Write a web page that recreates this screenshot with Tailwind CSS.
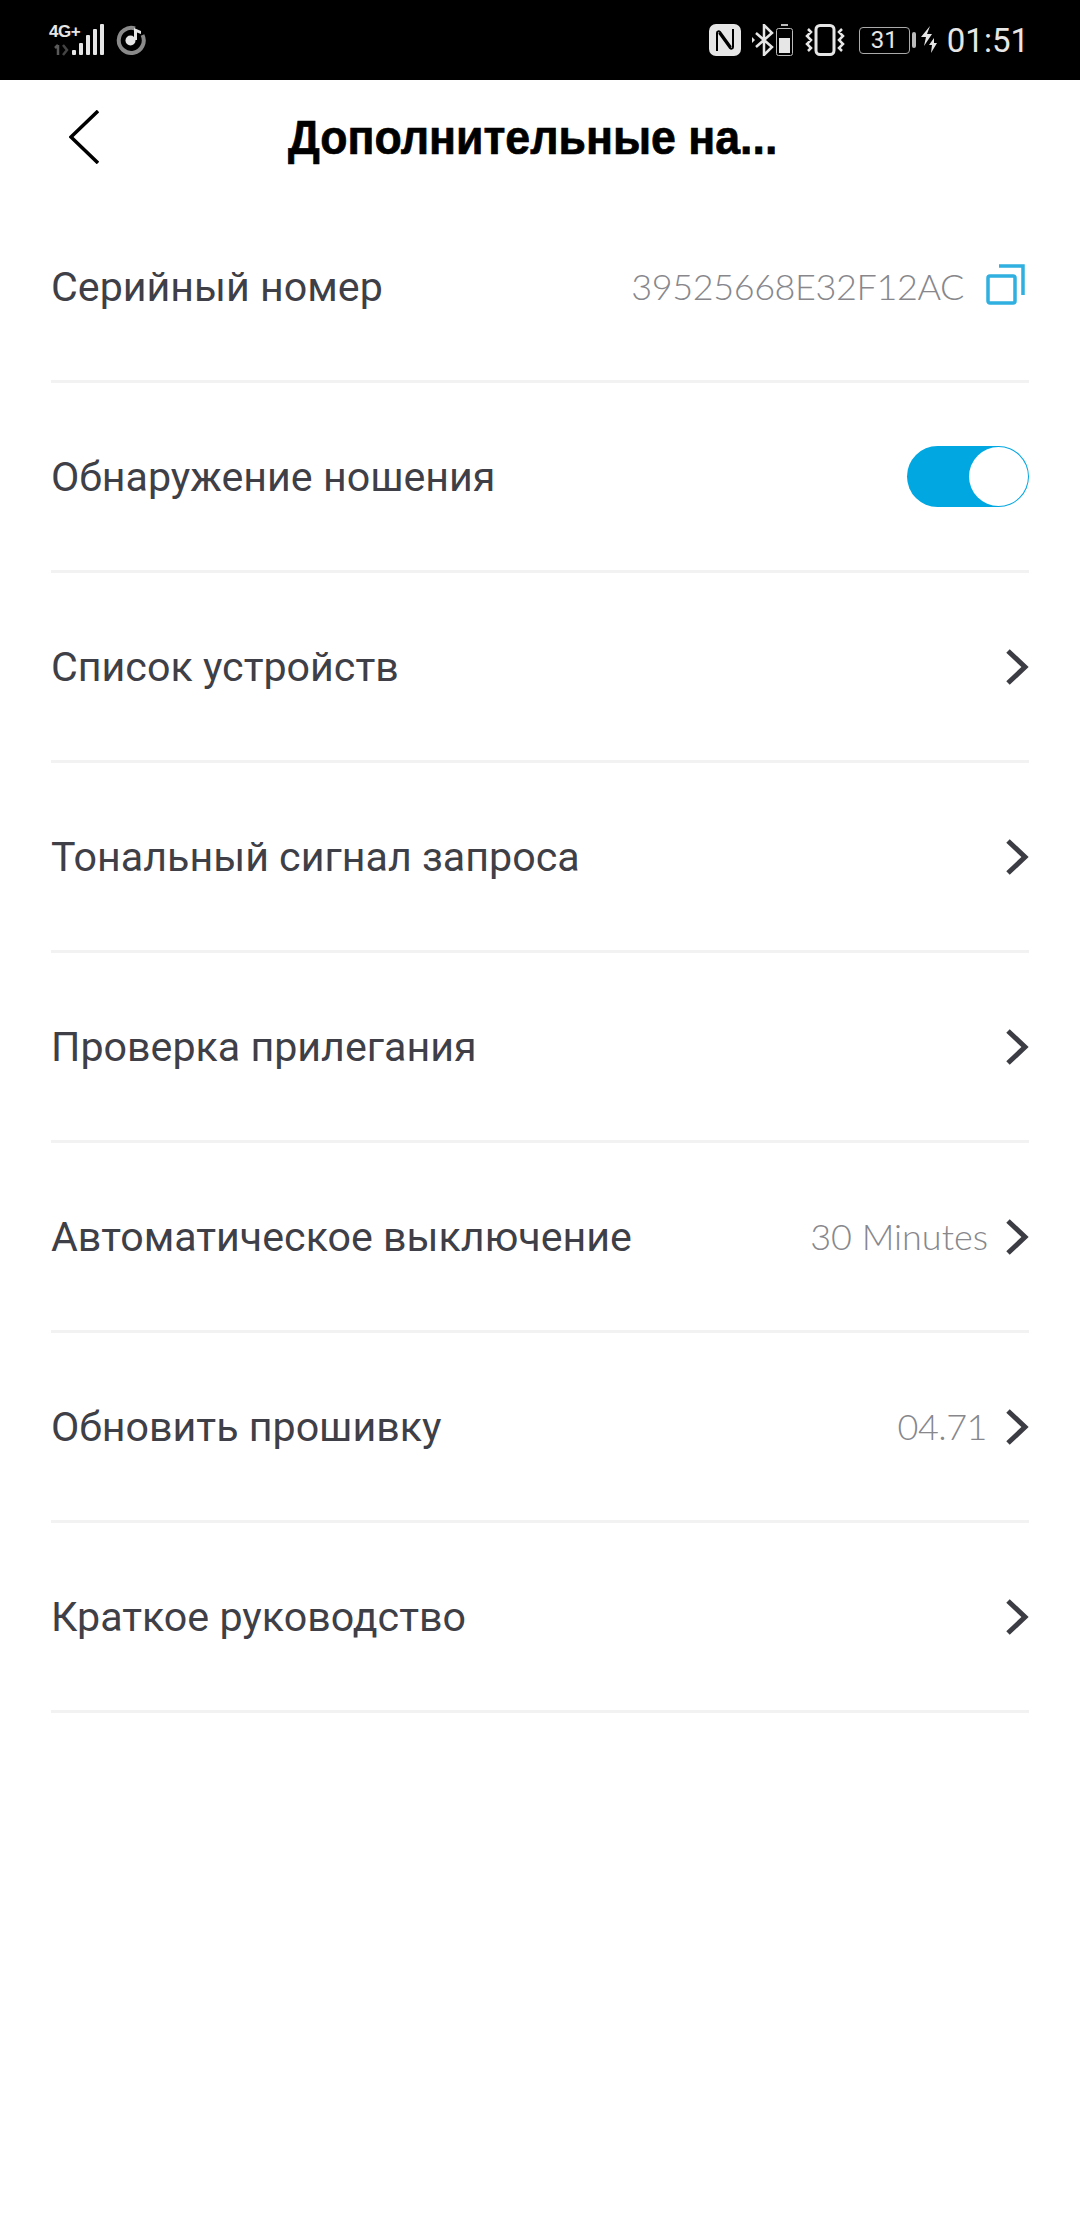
<!DOCTYPE html>
<html lang="ru">
<head>
    <meta charset="UTF-8">
    <meta name="viewport" content="width=device-width, initial-scale=1.0">
    <title>Дополнительные настройки</title>
    <script src="https://cdn.jsdelivr.net/npm/@tailwindcss/browser@4"></script>
</head>
<body class="bg-white font-['Roboto',sans-serif] antialiased">
<div class="w-[1080px] h-[2240px] bg-white overflow-hidden">

    <!-- status bar -->
    <div class="h-[80px] bg-black flex items-center justify-between pl-[49px] pr-[51px] text-[#e6e6e6]">
        <div class="flex items-center">
            <div class="w-[56px] h-[32px] flex flex-col justify-between relative">
                <span class="text-[17px] leading-[15px] font-bold tracking-[-0.5px] font-['Liberation_Sans',sans-serif]">4G+</span>
                <svg class="absolute left-0 top-0 w-[56px] h-[32px]" viewBox="0 0 56 32">
                    <path d="M9 21v10M9 21l-3 3" stroke="#5a5a5a" stroke-width="2.500" fill="none"/>
                    <path d="M14 21l4 5-4 5" stroke="#444" stroke-width="2.500" fill="none"/>
                    <rect x="23" y="26" width="4" height="5" rx="1" fill="#e6e6e6"/>
                    <rect x="30" y="19" width="4" height="12" rx="1" fill="#e6e6e6"/>
                    <rect x="37" y="11" width="4" height="20" rx="1" fill="#e6e6e6"/>
                    <rect x="44" y="5" width="4" height="26" rx="1" fill="#e6e6e6"/>
                    <rect x="51" y="0" width="4" height="31" rx="1" fill="#e6e6e6"/>
                </svg>
            </div>
            <svg class="w-[30px] h-[30px] ml-[11px]" viewBox="0 0 30 30">
                <path d="M19 3.500A12.500 12.500 0 1 0 26.500 10" stroke="#8a8a8a" stroke-width="4" fill="none"/>
                <circle cx="14.500" cy="15.500" r="5" fill="#e6e6e6"/>
                <path d="M18 15V3l7 3v3l-4-1.500V15z" fill="#e6e6e6"/>
            </svg>
        </div>
        <div class="flex items-center">
            <svg class="w-[32px] h-[32px]" viewBox="0 0 32 32">
                <rect width="32" height="32" rx="7" fill="#e6e6e6"/>
                <path d="M8 27V9c0-2 2-2 3-1l11 15M24 5v18c0 2-2 2-3 1L10 9" stroke="#000" stroke-width="2" fill="none"/>
            </svg>
            <svg class="w-[24px] h-[32px] ml-[11px]" viewBox="0 0 24 32">
                <path d="M4 9l16 14-8 8V1l8 8L4 23" stroke="#e6e6e6" stroke-width="2.500" fill="none"/>
                <path d="M0 13v6l3-3z" fill="#e6e6e6"/>
            </svg>
            <svg class="w-[17px] h-[32px]" viewBox="0 0 17 32">
                <rect x="5" y="0" width="7" height="2" fill="#bbb"/>
                <rect x="0.500" y="4.500" width="16" height="27" rx="2" stroke="#bbb" fill="none"/>
                <rect x="3" y="14" width="11" height="15" fill="#e6e6e6"/>
            </svg>
            <svg class="w-[40px] h-[32px] ml-[12px]" viewBox="0 0 40 32">
                <rect x="11" y="1.500" width="18" height="29" rx="4" stroke="#e6e6e6" stroke-width="3" fill="none"/>
                <path d="M3 5l3 3-4 4 4 4-4 4 4 4-3 3M37 5l-3 3 4 4-4 4 4 4-4 4 3 3" stroke="#e6e6e6" stroke-width="2.500" fill="none"/>
            </svg>
            <div class="ml-[14px] w-[51px] h-[27px] rounded-[4px] border border-[#aaa] flex items-center justify-center text-[24px] leading-none">31</div>
            <div class="ml-[2px] w-[4px] h-[16px] rounded-[2px] bg-[#bbb]"></div>
            <svg class="w-[17px] h-[28px] ml-[5px]" viewBox="0 0 17 28">
                <path d="M9 0L0 11h5L3 20l8-12H6zM13 12l-5 7h3l-1 8 6-10h-3z" fill="#e6e6e6"/>
            </svg>
            <span class="ml-[9px] text-[33px] leading-none">01:51</span>
        </div>
    </div>

    <!-- header -->
    <div class="h-[113px] flex">
        <svg class="w-[30px] h-[54px] ml-[69px] mt-[30px]" viewBox="0 0 30 54">
            <path d="M29 1L2 27l27 26" stroke="#000" stroke-width="3.500" fill="none"/>
        </svg>
        <h1 class="ml-[189px] mt-[28px] h-[60px] whitespace-nowrap origin-left scale-x-[0.93] text-[48px] leading-[60px] font-bold text-black [-webkit-text-stroke:0.7px_black] font-['Liberation_Sans',sans-serif]">Дополнительные на...</h1>
    </div>

    <!-- rows -->
    <div class="px-[51px] text-[#3f3f47] text-[41.2px]">
        <div class="h-[190px] border-b-[3px] border-[#f2f2f2] flex items-center justify-between">
            <span class="pt-[3px]">Серийный номер</span>
            <div class="flex items-center">
                <span class="text-[36px] text-[#87878c] font-['Lato',sans-serif] font-light tracking-[-0.4px] mb-[2px]">39525668E32F12AC</span>
                <svg class="w-[40px] h-[42px] ml-[22px] mr-[3px] mb-[6px]" viewBox="0 0 40 42">
                    <rect x="2" y="13" width="27" height="27" rx="2" stroke="#2fb0e0" stroke-width="3.500" fill="none"/>
                    <path d="M13 3h24v29" stroke="#2fb0e0" stroke-width="3.500" fill="none"/>
                </svg>
            </div>
        </div>
        <div class="h-[190px] border-b-[3px] border-[#f2f2f2] flex items-center justify-between">
            <span class="pt-[3px]">Обнаружение ношения</span>
            <div class="w-[122px] h-[61px] rounded-full bg-[#00a7e1] flex justify-end p-[1px]">
                <div class="w-[59px] h-[59px] rounded-full bg-white"></div>
            </div>
        </div>
        <div class="h-[190px] border-b-[3px] border-[#f2f2f2] flex items-center justify-between">
            <span class="pt-[3px]">Список устройств</span>
            <svg class="w-[24px] h-[38px]" viewBox="0 0 24 38"><path d="M3 3l17 16L3 35" stroke="#3c3c44" stroke-width="5" fill="none"/></svg>
        </div>
        <div class="h-[190px] border-b-[3px] border-[#f2f2f2] flex items-center justify-between">
            <span class="pt-[3px]">Тональный сигнал запроса</span>
            <svg class="w-[24px] h-[38px]" viewBox="0 0 24 38"><path d="M3 3l17 16L3 35" stroke="#3c3c44" stroke-width="5" fill="none"/></svg>
        </div>
        <div class="h-[190px] border-b-[3px] border-[#f2f2f2] flex items-center justify-between">
            <span class="pt-[3px]">Проверка прилегания</span>
            <svg class="w-[24px] h-[38px]" viewBox="0 0 24 38"><path d="M3 3l17 16L3 35" stroke="#3c3c44" stroke-width="5" fill="none"/></svg>
        </div>
        <div class="h-[190px] border-b-[3px] border-[#f2f2f2] flex items-center justify-between">
            <span class="pt-[3px]">Автоматическое выключение</span>
            <div class="flex items-center">
                <span class="text-[36px] text-[#87878c] font-['Lato',sans-serif] font-light mb-[2px] mr-[17px]">30 Minutes</span>
                <svg class="w-[24px] h-[38px]" viewBox="0 0 24 38"><path d="M3 3l17 16L3 35" stroke="#3c3c44" stroke-width="5" fill="none"/></svg>
            </div>
        </div>
        <div class="h-[190px] border-b-[3px] border-[#f2f2f2] flex items-center justify-between">
            <span class="pt-[3px]">Обновить прошивку</span>
            <div class="flex items-center">
                <span class="text-[36px] text-[#87878c] font-['Lato',sans-serif] font-light tracking-[-0.5px] mb-[2px] mr-[18px]">04.71</span>
                <svg class="w-[24px] h-[38px]" viewBox="0 0 24 38"><path d="M3 3l17 16L3 35" stroke="#3c3c44" stroke-width="5" fill="none"/></svg>
            </div>
        </div>
        <div class="h-[190px] border-b-[3px] border-[#f2f2f2] flex items-center justify-between">
            <span class="pt-[3px]">Краткое руководство</span>
            <svg class="w-[24px] h-[38px]" viewBox="0 0 24 38"><path d="M3 3l17 16L3 35" stroke="#3c3c44" stroke-width="5" fill="none"/></svg>
        </div>
    </div>
</div>
</body>
</html>
